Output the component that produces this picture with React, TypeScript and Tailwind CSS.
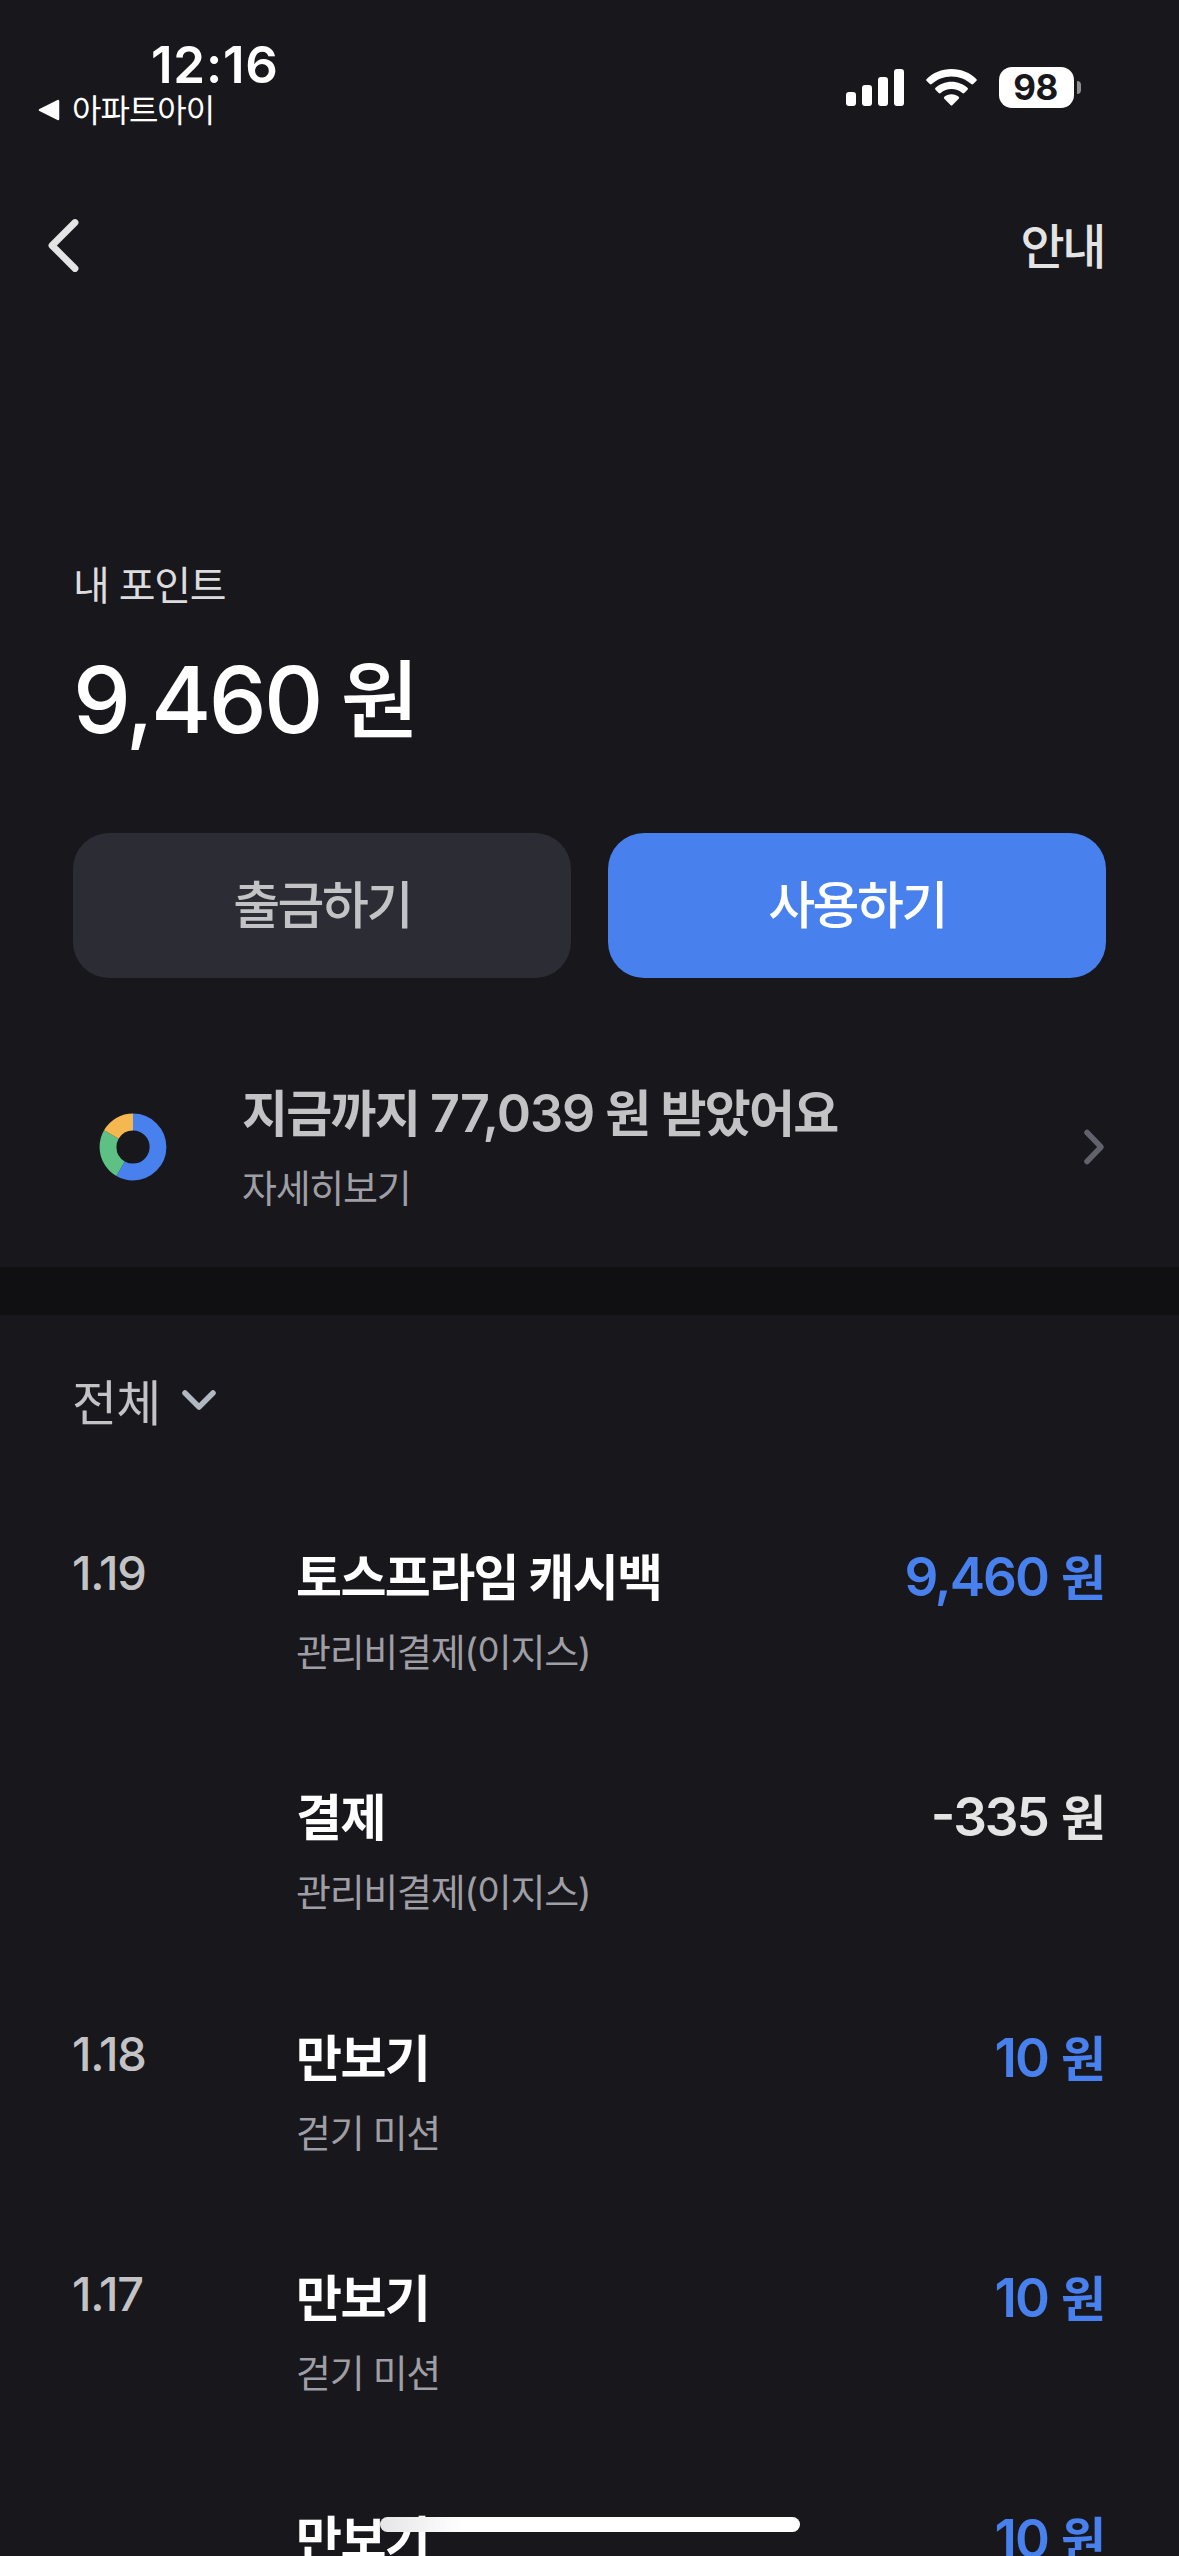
import React from "react";

type Item = {
  date?: string;
  title: string;
  desc?: string;
  amount: string;
  minus?: boolean;
};

const items: Item[] = [
  { date: "1.19", title: "토스프라임 캐시백", desc: "관리비결제(이지스)", amount: "9,460" },
  { title: "결제", desc: "관리비결제(이지스)", amount: "-335", minus: true },
  { date: "1.18", title: "만보기", desc: "걷기 미션", amount: "10" },
  { date: "1.17", title: "만보기", desc: "걷기 미션", amount: "10" },
  { title: "만보기", amount: "10" },
];

function StatusBar() {
  return (
    <div className="flex h-[200px] shrink-0 items-start justify-between pl-[38px] pr-[98px] pt-[40px] text-white">
      <div>
        <div className="pl-[113px] text-[51px] font-semibold leading-[50px] tracking-[0.8px]">
          12:16
        </div>
        <div className="flex h-[40px] items-center gap-[12px] whitespace-nowrap">
          <svg width="22" height="22" viewBox="0 0 22 22" className="shrink-0">
            <path
              d="M2 11 L20 2 V20 Z"
              fill="white"
              stroke="white"
              strokeWidth="2.5"
              strokeLinejoin="round"
            />
          </svg>
          <span className="pt-px text-[32px] leading-[40px] tracking-[-1px]">아파트아이</span>
        </div>
      </div>

      <div className="mt-[27px] flex h-[41px] items-center">
        {/* Signal */}
        <div className="flex h-[37px] items-end gap-[6px]">
          <div className="h-[14px] w-[10px] rounded-[3px] bg-white" />
          <div className="h-[21px] w-[10px] rounded-[3px] bg-white" />
          <div className="h-[29px] w-[10px] rounded-[3px] bg-white" />
          <div className="h-[37px] w-[10px] rounded-[3px] bg-white" />
        </div>
        {/* Wifi */}
        <svg width="51" height="37" viewBox="0 0 51 37" className="ml-[22px]" fill="white">
          <path d="M25.5 0 C35.5 0 44 3.8 50.3 10 Q51.3 11 50.3 12 L47.2 15.1 Q46.3 16 45.3 15.1 C40 10.2 33.2 7.4 25.5 7.4 C17.8 7.4 11 10.2 5.7 15.1 Q4.7 16 3.8 15.1 L0.7 12 Q-0.3 11 0.7 10 C7 3.8 15.5 0 25.5 0 Z" />
          <path d="M25.5 12.7 C31.7 12.7 37.3 15 41.5 18.8 Q42.5 19.8 41.5 20.8 L38.3 24 Q37.3 24.9 36.3 24 C33.4 21.5 29.7 20 25.5 20 C21.3 20 17.6 21.5 14.7 24 Q13.7 24.9 12.7 24 L9.5 20.8 Q8.5 19.8 9.5 18.8 C13.7 15 19.3 12.7 25.5 12.7 Z" />
          <path d="M25.5 25.3 C28.3 25.3 30.8 26.2 32.7 27.7 Q33.7 28.7 32.7 29.7 L26.5 36 Q25.5 37 24.5 36 L18.3 29.7 Q17.3 28.7 18.3 27.7 C20.2 26.2 22.7 25.3 25.5 25.3 Z" />
        </svg>
        {/* Battery */}
        <div className="ml-[22px] flex h-[41px] w-[75px] items-center justify-center rounded-[13px] bg-white pr-[2px] text-[35px] font-bold leading-[41px] tracking-[-0.5px] text-[#18171c]">
          98
        </div>
        <div className="ml-[3px] h-[13px] w-[4px] rounded-r-full bg-[#8f8f92]" />
      </div>
    </div>
  );
}

function Donut() {
  // circumference is normalised to 360
  return (
    <svg width="68" height="68" viewBox="0 0 68 68" fill="none" strokeWidth="16.8">
      <g transform="rotate(-90 34 34)">
        <circle cx="34" cy="34" r="25" pathLength={360} stroke="#4880ee" strokeDasharray="210 150" />
        <circle cx="34" cy="34" r="25" pathLength={360} stroke="#5dc186" strokeDasharray="90 270" strokeDashoffset="-210" />
        <circle cx="34" cy="34" r="25" pathLength={360} stroke="#f5b74f" strokeDasharray="60 300" strokeDashoffset="-300" />
      </g>
    </svg>
  );
}

function Row({ item }: { item: Item }) {
  return (
    <div className="flex h-[240.4px] shrink-0 items-start">
      <div className="w-[224px] text-[47px] font-medium leading-[60px] tracking-[-1.3px] text-[#c3c3c6]">
        {item.date}
      </div>
      <div className="flex-1 pt-[5px]">
        <div className="text-[50px] font-bold leading-[60px] tracking-[-1.6px] text-white">
          {item.title}
        </div>
        {item.desc && (
          <div className="mt-[19px] text-[38px] leading-[50px] tracking-[-1.3px] text-[#9e9ea4]">
            {item.desc}
          </div>
        )}
      </div>
      <div
        className={`flex gap-[13px] pt-[4px] text-[53px] font-semibold leading-[60px] ${
          item.minus ? "text-[#e4e4e5]" : "text-[#4880ee]"
        }`}
      >
        <span className="tracking-[-2px] [font-feature-settings:'case']">{item.amount}</span>
        <span className="pt-[2px] text-[49px]">원</span>
      </div>
    </div>
  );
}

export default function App() {
  return (
    <div className="relative flex h-[2556px] w-[1179px] flex-col overflow-hidden bg-[#18171c] font-['Inter','Noto_Sans_CJK_KR',sans-serif]">
      <StatusBar />

      {/* Header */}
      <div className="flex h-[92px] shrink-0 items-center justify-between pl-[46px] pr-[75px]">
        <svg width="36" height="56" viewBox="0 0 36 56" fill="none">
          <path
            d="M29 4.5 L6 27.5 L29 50.5"
            stroke="#e4e4e5"
            strokeWidth="6.8"
            strokeLinecap="round"
            strokeLinejoin="round"
          />
        </svg>
        <span className="pt-px text-[48px] font-medium leading-[60px] tracking-[-2.4px] text-[#e4e4e5]">
          안내
        </span>
      </div>

      {/* Balance */}
      <div className="flex shrink-0 flex-col px-[73px] pt-[269px]">
        <div className="text-[40px] leading-[50px] tracking-[-1.2px] text-[#dcdcde]">내 포인트</div>
        <div className="mt-[34px] flex gap-[20px] text-[92px] font-medium leading-[110px] text-white">
          <span className="tracking-[-2.7px]">9,460</span>
          <span className="pt-[2px] text-[86px] leading-[108px]">원</span>
        </div>
        <div className="mt-[78px] grid grid-cols-2 gap-[37px]">
          <button className="h-[145px] rounded-[36px] bg-[#2c2c35] pt-[2px] text-[51px] font-medium tracking-[-2.5px] text-[#c3c3c6]">
            출금하기
          </button>
          <button className="h-[145px] rounded-[36px] bg-[#4880ee] pt-[2px] text-[51px] font-medium tracking-[-2.5px] text-white">
            사용하기
          </button>
        </div>
      </div>

      {/* Total received */}
      <div className="mt-[102px] flex h-[133px] shrink-0 items-center pl-[99px] pr-[73px]">
        <Donut />
        <div className="ml-[75px] flex h-full flex-1 flex-col pt-[4px]">
          <div className="whitespace-nowrap text-[50px] font-semibold leading-[60px] tracking-[-1.7px] text-[#c3c3c6]">
            지금까지 <span className="text-[52px] tracking-[-1px]">77,039</span> 원 받았어요
          </div>
          <div className="mt-[19px] text-[38px] leading-[50px] tracking-[-1.3px] text-[#9e9ea4]">
            자세히보기
          </div>
        </div>
        <svg width="24" height="40" viewBox="0 0 24 40" fill="none">
          <path
            d="M5 5.5 L19 20 L5 34.5"
            stroke="#62626d"
            strokeWidth="5.5"
            strokeLinecap="round"
            strokeLinejoin="round"
          />
        </svg>
      </div>

      <div className="mt-[54px] h-[48px] shrink-0 bg-[#101013]" />

      {/* Filter */}
      <div className="mt-[58px] flex h-[60px] shrink-0 items-center px-[72px]">
        <span className="pt-px text-[49px] leading-[60px] tracking-[-0.8px] text-[#c3c3c6]">전체</span>
        <svg width="38" height="24" viewBox="0 0 38 24" fill="none" className="mb-[6px] ml-[19px]">
          <path
            d="M5 5 L19 19 L33 5"
            stroke="#b0b8c1"
            strokeWidth="5.5"
            strokeLinecap="round"
            strokeLinejoin="round"
          />
        </svg>
      </div>

      {/* History */}
      <div className="mt-[110px] flex shrink-0 flex-col pl-[72px] pr-[73px]">
        {items.map((item, i) => (
          <Row key={i} item={item} />
        ))}
      </div>

      {/* Home indicator */}
      <div className="absolute bottom-[24px] left-[380px] h-[15px] w-[420px] rounded-full bg-linear-to-r from-[#e6e6e6] to-white to-20%" />
    </div>
  );
}
